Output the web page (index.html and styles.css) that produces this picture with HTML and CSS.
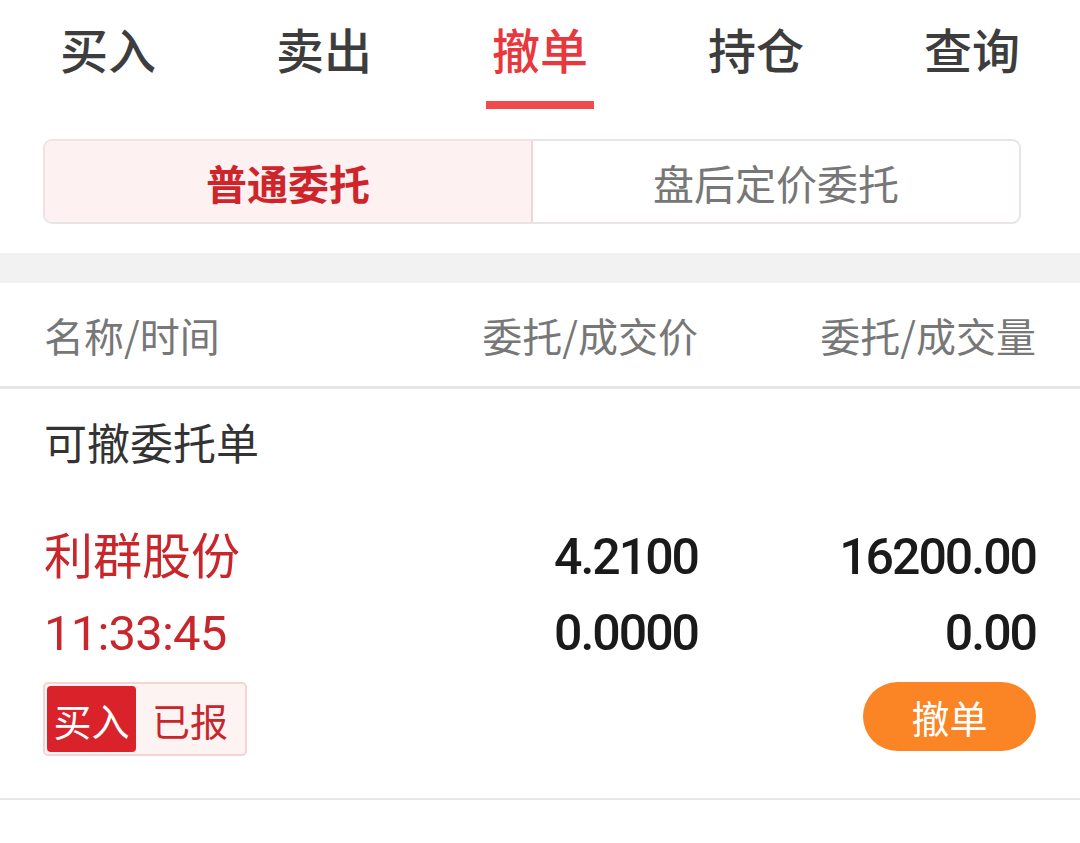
FILE: index.html
```html
<!DOCTYPE html>
<html lang="zh-CN">

<head>
  <meta charset="UTF-8">
  <meta name="viewport" content="width=device-width, initial-scale=1.0">
  <title>撤单</title>
  <link rel="stylesheet" href="styles.css">
</head>

<body>
  <nav class="tabs">
    <div class="tab">买入</div>
    <div class="tab">卖出</div>
    <div class="tab active">撤单</div>
    <div class="tab">持仓</div>
    <div class="tab">查询</div>
  </nav>

  <div class="segment">
    <div class="seg-item on">普通委托</div>
    <div class="seg-item">盘后定价委托</div>
  </div>

  <div class="gap-bar"></div>

  <div class="head-row">
    <div>名称/时间</div>
    <div class="right">委托/成交价</div>
    <div class="right">委托/成交量</div>
  </div>

  <div class="order-list">
    <div class="list-title">可撤委托单</div>

    <div class="order">
      <div class="order-line">
        <div class="stock-name">利群股份</div>
        <div class="num">4.2100</div>
        <div class="num">16200.00</div>
      </div>
      <div class="order-line second">
        <div class="stock-time">11:33:45</div>
        <div class="num">0.0000</div>
        <div class="num">0.00</div>
      </div>
      <div class="order-foot">
        <div class="badge">
          <span class="badge-type">买入</span>
          <span class="badge-state">已报</span>
        </div>
        <button class="cancel">撤单</button>
      </div>
    </div>
  </div>
</body>

</html>
```

FILE: styles.css
```css
body {
  margin: 0;
  background: #fff;
  font-family: "Noto Sans CJK SC", "Noto Sans", sans-serif;
  color: #333;
}

.tabs {
  display: flex;
  height: 110px;
}

.tab {
  flex: 1;
  display: flex;
  flex-direction: column;
  align-items: center;
  padding-top: 20px;
  font-size: 48px;
  line-height: 56px;
  font-weight: 500;
  color: #3d3d3d;
}

.tab::after {
  content: "";
  display: block;
  width: 108px;
  height: 8px;
  margin-top: 25px;
}

.tab.active {
  color: #e8383e;
}

.tab.active::after {
  background: #f24a4c;
}

.segment {
  display: flex;
  margin: 29px 59px 0 43px;
  height: 85px;
  border: 2px solid #ebe4e5;
  border-radius: 9px;
  overflow: hidden;
  box-sizing: border-box;
}

.seg-item {
  flex: 1;
  display: flex;
  align-items: center;
  justify-content: center;
  font-size: 41px;
  color: #777;
}

.seg-item.on {
  background: #fdf1f2;
  border-right: 2px solid #f2d3d6;
  color: #d0242b;
  font-weight: 700;
}

.gap-bar {
  height: 30px;
  margin-top: 29px;
  background: #f2f2f2;
}

.head-row,
.order-line {
  display: grid;
  grid-template-columns: 1fr 300px 338px;
  padding: 0 44px;
  align-items: center;
}

.head-row {
  height: 103px;
  border-bottom: 3px solid #e6e6e6;
  font-size: 40px;
  color: #777;
}

.right,
.num {
  text-align: right;
}

.order-list {
  border-bottom: 2px solid #e8e8e8;
  padding-bottom: 42px;
}

.list-title {
  padding: 28px 44px 60px;
  font-size: 43px;
  line-height: 48px;
  color: #333;
}

.order-line {
  height: 60px;
}

.order-line.second {
  margin-top: 18px;
}

.stock-name {
  font-size: 49px;
  color: #c9262c;
  margin-top: -8px;
}

.stock-time {
  font-family: Roboto, "Noto Sans", sans-serif;
  font-size: 49px;
  letter-spacing: -0.8px;
  color: #c9262c;
}

.num {
  font-family: Roboto, "Noto Sans", sans-serif;
  font-size: 50px;
  font-weight: 500;
  letter-spacing: -2px;
  color: #1a1a1a;
}

.order-foot {
  display: flex;
  justify-content: space-between;
  align-items: flex-start;
  margin-top: 19px;
  padding: 0 43px;
}

.badge {
  display: flex;
  align-items: center;
  height: 74px;
  padding: 0 2px;
  border: 2px solid #f5d4d6;
  border-radius: 5px;
  background: #fdf3f3;
  box-sizing: border-box;
  font-size: 38px;
}

.badge-type {
  display: flex;
  align-items: center;
  justify-content: center;
  width: 89px;
  height: 66px;
  border-radius: 4px;
  background: #d9222a;
  color: #fff;
}

.badge-state {
  padding: 0 15px 0 16px;
  color: #c9262c;
}

.cancel {
  width: 173px;
  height: 69px;
  border: none;
  border-radius: 35px;
  background: #fb8424;
  color: #fff;
  font-family: "Noto Sans CJK SC", sans-serif;
  font-size: 38px;
  padding: 0;
  margin-right: 1px;
}
```
